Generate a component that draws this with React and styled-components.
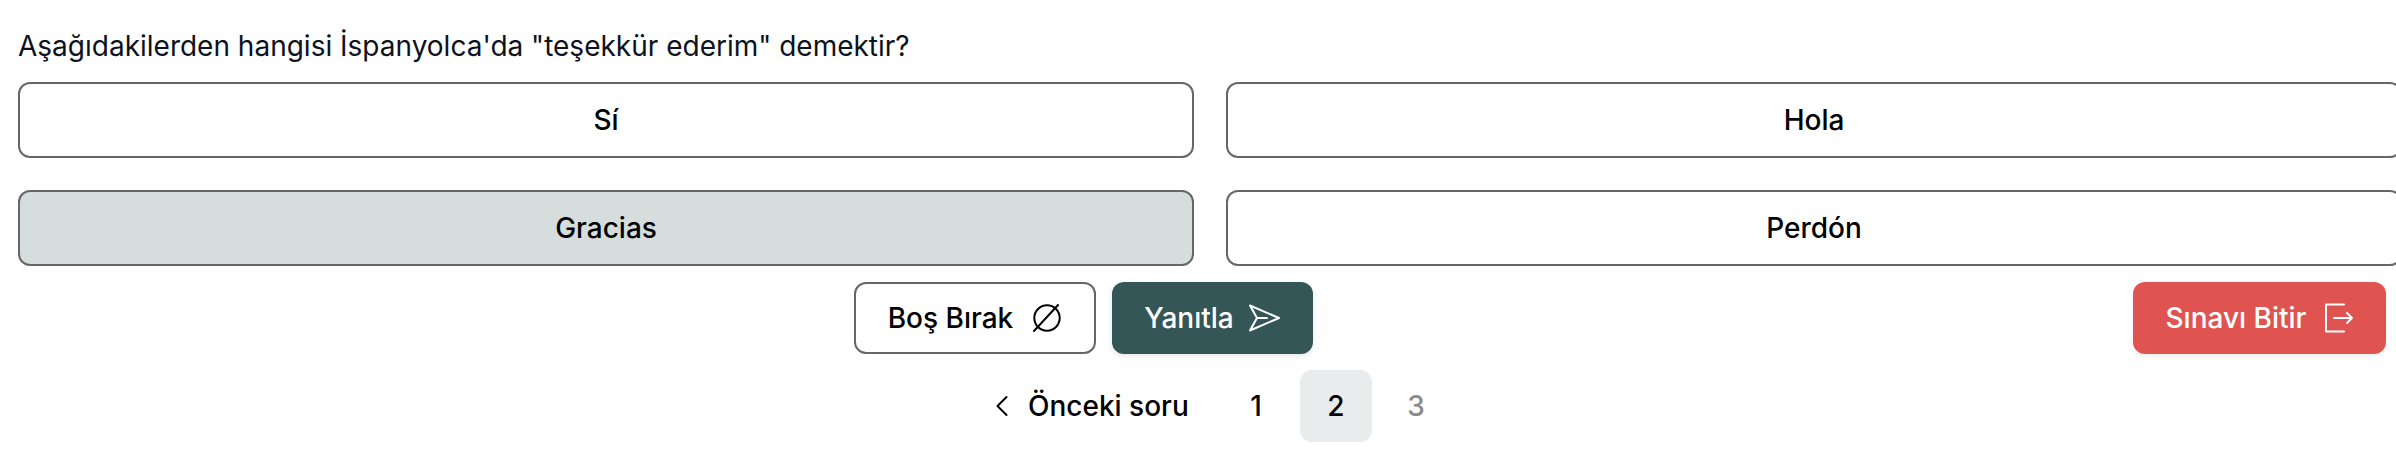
import React from "react";
import styled, { createGlobalStyle } from "styled-components";

const Global = createGlobalStyle`
  html, body { margin: 0; padding: 0; background: #fff; overflow: hidden; }
  body { font-family: Inter, "Noto Sans", sans-serif; color: #000; }
`;

const Page = styled.div`
  width: 2396px;
  height: 454px;
  overflow: hidden;
  box-sizing: border-box;
  padding: 26px 0 0 18px;
`;
const Question = styled.div`
  font-size: 28px;
  line-height: 40px;
  height: 40px;
  color: #0c1220;
  white-space: nowrap;
`;
const Options = styled.div`
  display: grid;
  grid-template-columns: 1176px 1176px;
  gap: 32px;
  margin-top: 16px;
  width: 2384px;
`;
const Option = styled.div`
  box-sizing: border-box;
  height: 76px;
  border: 2px solid #666;
  border-radius: 12px;
  background: ${(p) => (p.$selected ? "#d5dedd" : "#fff")};
  display: flex;
  align-items: center;
  justify-content: center;
  font-size: 28px;
  font-weight: 500;
`;
const Actions = styled.div`
  display: flex;
  align-items: center;
  gap: 16px;
  height: 72px;
  margin-top: 16px;
  padding-left: 836px;
  padding-right: 10px;
  box-sizing: border-box;
  width: 2378px;
`;
const ActionButton = styled.div`
  box-sizing: border-box;
  height: 72px;
  border-radius: 12px;
  display: flex;
  align-items: center;
  justify-content: center;
  font-size: 28px;
  font-weight: 500;
  white-space: nowrap;
`;
const SkipButton = styled(ActionButton)`
  width: 242px;
  padding-left: 3px;
  gap: 16px;
  background: #fff;
  border: 2px solid #666;
  color: #000;
`;
const AnswerButton = styled(ActionButton)`
  width: 201px;
  padding-left: 1.5px;
  gap: 12.5px;
  background: #355657;
  color: #fff;
  box-shadow: 0 2px 6px rgba(0, 0, 0, 0.1);
`;
const FinishButton = styled(ActionButton)`
  width: 253px;
  padding-left: 4px;
  gap: 15px;
  background: #df5450;
  color: #fff;
  margin-left: auto;
  box-shadow: 0 2px 6px rgba(0, 0, 0, 0.08);
`;
const Pager = styled.div`
  display: flex;
  align-items: center;
  gap: 8px;
  margin-top: 16px;
  padding-left: 966px;
  font-size: 28px;
  font-weight: 500;
`;
const PrevLink = styled.div`
  display: flex;
  align-items: center;
  gap: 8px;
  height: 72px;
  width: 228px;
  white-space: nowrap;
`;
const PageTile = styled.div`
  width: 72px;
  height: 72px;
  border-radius: 12px;
  display: flex;
  align-items: center;
  justify-content: center;
  background: ${(p) => (p.$active ? "#e9eced" : "transparent")};
  color: ${(p) => (p.$muted ? "#8a8a8a" : "#000")};
`;
const Glyph = styled.svg`
  width: 36px;
  height: 36px;
  flex: none;
  fill: none;
  stroke: currentColor;
  stroke-width: 2;
  stroke-linecap: round;
  stroke-linejoin: round;
`;

const EmptyIcon = () => (
  <Glyph viewBox="0 0 36 36">
    <circle cx="18" cy="18" r="12.7" />
    <path d="M5 31L29 5" />
  </Glyph>
);
const SendIcon = () => (
  <Glyph viewBox="0 0 36 36">
    <path d="M33 18L4 5.5L11 18L4 30.5ZM11 18H21" />
  </Glyph>
);
const ExitIcon = () => (
  <Glyph viewBox="0 0 36 36">
    <path d="M23 4.5H5V31.5H23M13 18H31M26 13L31 18L26 23" />
  </Glyph>
);
const BackIcon = () => (
  <Glyph viewBox="0 0 36 36">
    <path d="M22.5 9L13.5 18L22.5 27" />
  </Glyph>
);

export default function App() {
  return (
    <Page>
      <Global />
      <Question>Aşağıdakilerden hangisi İspanyolca'da "teşekkür ederim" demektir?</Question>
      <Options>
        <Option>Sí</Option>
        <Option>Hola</Option>
        <Option $selected>Gracias</Option>
        <Option>Perdón</Option>
      </Options>
      <Actions>
        <SkipButton>Boş Bırak <EmptyIcon /></SkipButton>
        <AnswerButton>Yanıtla <SendIcon /></AnswerButton>
        <FinishButton>Sınavı Bitir <ExitIcon /></FinishButton>
      </Actions>
      <Pager>
        <PrevLink><BackIcon />Önceki soru</PrevLink>
        <PageTile>1</PageTile>
        <PageTile $active>2</PageTile>
        <PageTile $muted>3</PageTile>
      </Pager>
    </Page>
  );
}
